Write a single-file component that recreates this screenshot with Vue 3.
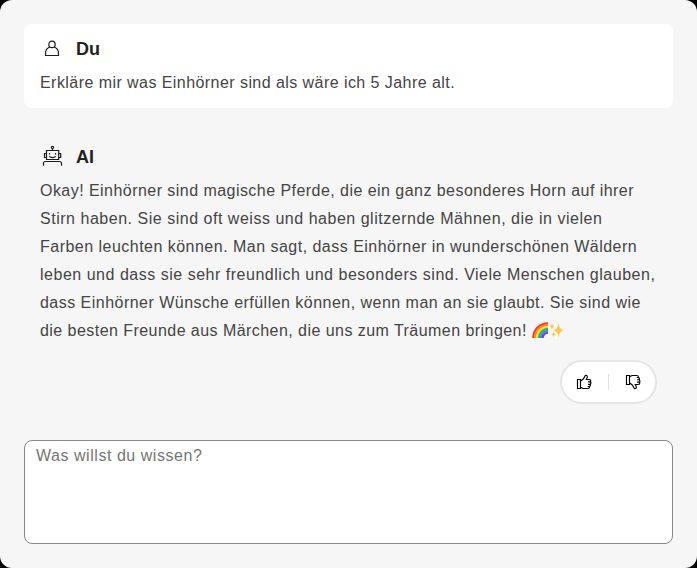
<script setup>
import { ref } from 'vue'

const question = ref('')
const prompt = 'Erkläre mir was Einhörner sind als wäre ich 5 Jahre alt.'
const answer = [
  { text: 'Okay! Einhörner sind magische Pferde, die ein ganz besonderes Horn auf ihrer', spacing: 0.455 },
  { text: 'Stirn haben. Sie sind oft weiss und haben glitzernde Mähnen, die in vielen', spacing: 0.52 },
  { text: 'Farben leuchten können. Man sagt, dass Einhörner in wunderschönen Wäldern', spacing: 0.48 },
  { text: 'leben und dass sie sehr freundlich und besonders sind. Viele Menschen glauben,', spacing: 0.515 },
  { text: 'dass Einhörner Wünsche erfüllen können, wenn man an sie glaubt. Sie sind wie', spacing: 0.475 },
  { text: 'die besten Freunde aus Märchen, die uns zum Träumen bringen!', spacing: 0.45 },
]
const rainbow = [
  ['#ee3b35', 14.8],
  ['#fb8c1c', 12.9],
  ['#fcdc2c', 11],
  ['#3fb44b', 9.1],
  ['#2d8fe8', 7.2],
  ['#7a3fc4', 5.3],
]
</script>

<template>
  <main class="chat">
    <section class="message user">
      <header class="author">
        <svg class="icon" viewBox="0 0 24 24">
          <circle cx="12" cy="8.4" r="3.2" />
          <path d="M9.7 11C7.1 12.1 5.5 14.4 5.5 17V19.5H18.5V17C18.5 14.4 16.9 12.1 14.3 11" />
        </svg>
        <h2>Du</h2>
      </header>
      <p>{{ prompt }}</p>
    </section>

    <section class="message ai">
      <header class="author">
        <svg class="icon" viewBox="0 0 24 24">
          <circle cx="12.5" cy="3.4" r="1.1" />
          <path d="M12.5 4.5V6.5M6.5 6.5H18.7V15.5H6.5ZM6.5 9.5H4.5V13.5H6.5M18.7 9.5H20.7V13.5H18.7" />
          <path d="M9.5 9V10.4M15.5 9V10.4M9.3 12C10.6 14.1 14.4 14.1 15.7 12" />
          <path d="M3.5 21.7V19.5Q3.5 17.5 5.5 17.5H19.5Q21.5 17.5 21.5 19.5V21.7" />
        </svg>
        <h2>AI</h2>
      </header>
      <p>
        <span v-for="(line, i) in answer" :key="i" class="line" :style="{ letterSpacing: line.spacing + 'px' }">
          {{ line.text }}
          <svg v-if="i === answer.length - 1" class="emoji" viewBox="0 0 33 18">
            <path
              v-for="[color, r] in rainbow"
              :key="color"
              :d="`M${16 - r} 17A${r} ${r} 0 0 1 16 ${17 - r}`"
              :stroke="color"
              stroke-width="2.1"
              fill="none"
            />
            <g fill="#fbc94b">
              <path d="M26.5 2Q27.2 8.3 32 9.3Q27.2 10.3 26.5 16.6Q25.8 10.3 21.5 9.3Q25.8 8.3 26.5 2Z" />
              <path d="M20 2.3Q20.4 5 22.3 5.4Q20.4 5.8 20 8.5Q19.6 5.8 17.7 5.4Q19.6 5 20 2.3Z" />
              <path d="M21.7 10.7Q22.1 13 24 13.4Q22.1 13.8 21.7 16.1Q21.3 13.8 19.4 13.4Q21.3 13 21.7 10.7Z" />
            </g>
          </svg>
        </span>
      </p>
      <div class="feedback">
        <button aria-label="Gefällt mir">
          <svg class="thumb" viewBox="0 0 16 16">
            <path d="M1.5 5.5H4.5V14.5H1.5ZM4.5 7.2L7.5 4.8L9.3 1.5Q11.6 .9 11.3 3.2L10.3 5.5H13.4Q15 5.8 14.6 7.8Q15.4 9 14.3 10.2Q14.8 11.7 13.6 12.5Q13.5 14.5 12 14.5H7L4.5 13.2M12 7.9H14.5M12 10.3H14.2M11.7 12.5H13.5" />
          </svg>
        </button>
        <i class="divider"></i>
        <button aria-label="Gefällt mir nicht">
          <svg class="thumb down" viewBox="0 0 16 16">
            <path d="M1.5 5.5H4.5V14.5H1.5ZM4.5 7.2L7.5 4.8L9.3 1.5Q11.6 .9 11.3 3.2L10.3 5.5H13.4Q15 5.8 14.6 7.8Q15.4 9 14.3 10.2Q14.8 11.7 13.6 12.5Q13.5 14.5 12 14.5H7L4.5 13.2M12 7.9H14.5M12 10.3H14.2M11.7 12.5H13.5" />
          </svg>
        </button>
      </div>
    </section>

    <textarea v-model="question" placeholder="Was willst du wissen?"></textarea>
  </main>
</template>

<style>
body {
  background: #000;
}
</style>

<style scoped>
.chat {
  box-sizing: border-box;
  display: flex;
  flex-direction: column;
  height: 568px;
  padding: 24px;
  border-radius: 12px;
  background: #f6f6f6;
  color: #444;
  font: 16px/28px "Liberation Sans", Arial, sans-serif;
  letter-spacing: 0.44px;
}
.message {
  padding: 12px 16px;
  border-radius: 8px;
}
.user {
  height: 60px;
  background: #fff;
}
.ai {
  margin-top: 24px;
}
.author {
  display: flex;
  align-items: center;
  gap: 12px;
  height: 24px;
}
.icon {
  width: 24px;
  height: 24px;
  fill: none;
  stroke: #1c1c1c;
  stroke-width: 1.2;
}
h2 {
  margin: 0;
  padding-top: 1px;
  color: #212121;
  font-size: 18px;
  line-height: 24px;
  letter-spacing: 0;
}
p {
  margin: 9px 0 0;
}
.line {
  display: flex;
  align-items: center;
  white-space: nowrap;
}
.emoji {
  width: 33px;
  height: 18px;
  margin: 0 0 3px 5px;
}
.feedback {
  box-sizing: border-box;
  display: flex;
  align-items: center;
  justify-content: space-between;
  width: 97px;
  height: 44px;
  margin: 15px 0 0 auto;
  padding: 0 14px;
  border: 2px solid #e5e5e5;
  border-radius: 22px;
  background: #fff;
}
button {
  display: flex;
  padding: 0;
  border: 0;
  background: none;
}
.thumb {
  width: 16px;
  height: 16px;
  fill: none;
  stroke: #000;
  stroke-width: 1.15;
}
.down {
  transform: scaleY(-1);
}
.divider {
  width: 1px;
  height: 16px;
  background: #e0e0e0;
}
textarea {
  box-sizing: border-box;
  width: 100%;
  height: 104px;
  margin: auto 0 0;
  padding: 1px 11px 0;
  border: 1px solid #888;
  border-radius: 8px;
  outline: 0;
  background: #fff;
  color: #444;
  font: inherit;
  letter-spacing: 0.54px;
  resize: none;
}
textarea::placeholder {
  color: #757575;
}
</style>
